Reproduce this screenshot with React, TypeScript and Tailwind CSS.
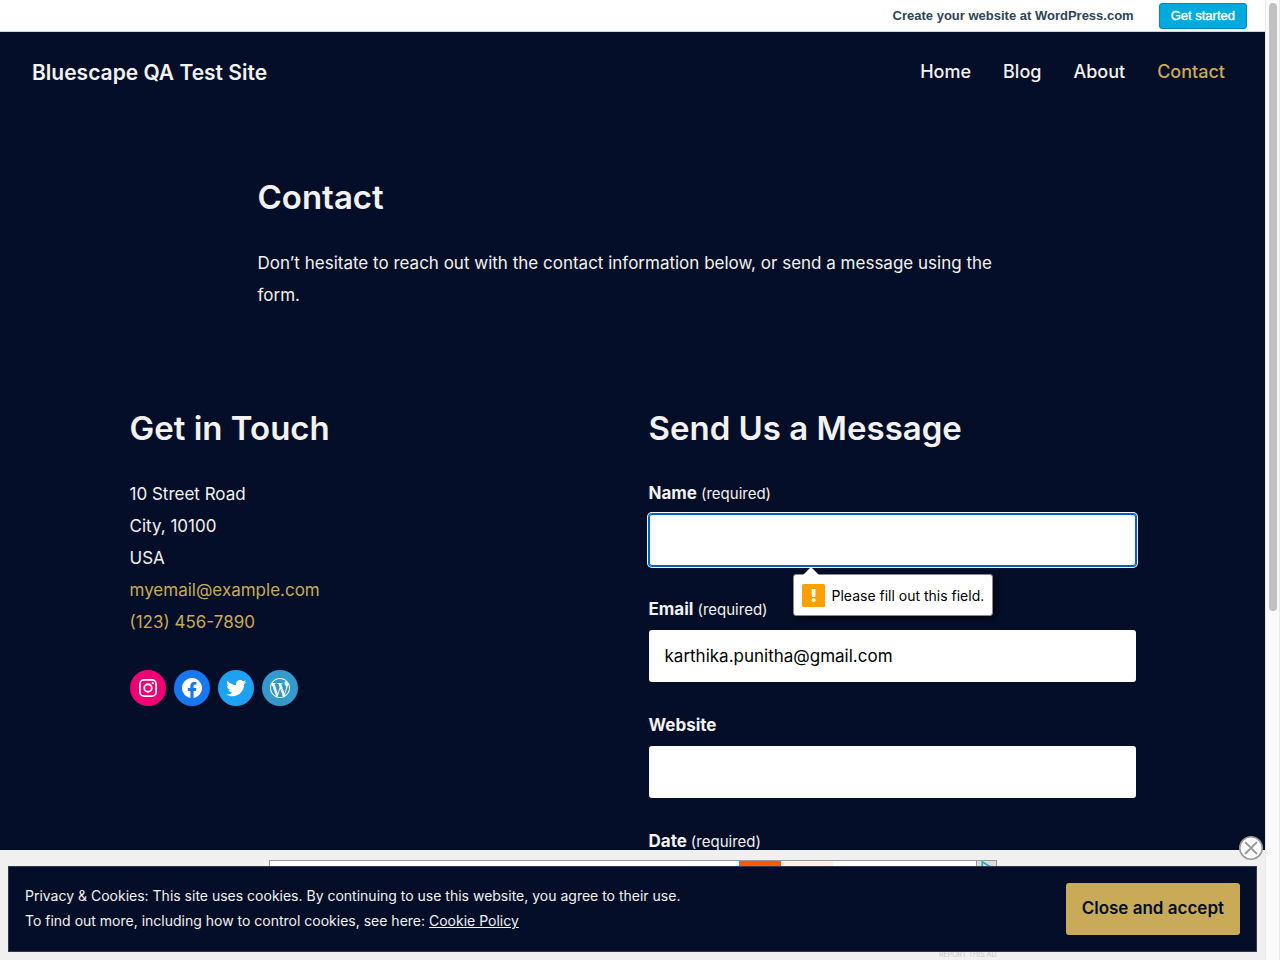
import type { ReactNode } from 'react';

const navItems = [
  { label: 'Home', active: false },
  { label: 'Blog', active: false },
  { label: 'About', active: false },
  { label: 'Contact', active: true },
];

function InstagramIcon() {
  return (
    <svg viewBox="0 0 24 24" className="size-6" fill="none" stroke="currentColor" strokeWidth="1.8" aria-hidden="true">
      <rect x="3.9" y="3.9" width="16.2" height="16.2" rx="4.2" />
      <circle cx="12" cy="12" r="3.75" />
      <circle cx="16.8" cy="7.2" r="1.1" fill="currentColor" stroke="none" />
    </svg>
  );
}

function FacebookIcon() {
  return (
    <svg viewBox="0 0 24 24" className="size-6" fill="currentColor" aria-hidden="true">
      <path d="M12 2C6.5 2 2 6.5 2 12c0 5 3.7 9.1 8.4 9.9v-7H7.9V12h2.5V9.8c0-2.5 1.5-3.9 3.8-3.9 1.1 0 2.2.2 2.2.2v2.5h-1.3c-1.2 0-1.6.8-1.6 1.6V12h2.8l-.4 2.9h-2.3v7C18.3 21.1 22 17 22 12c0-5.5-4.5-10-10-10z" />
    </svg>
  );
}

function TwitterIcon() {
  return (
    <svg viewBox="0 0 24 24" className="size-6" fill="currentColor" aria-hidden="true">
      <path d="M22.23,5.924c-0.736,0.326-1.527,0.547-2.357,0.646c0.847-0.508,1.498-1.312,1.804-2.27c-0.793,0.47-1.671,0.812-2.606,0.996C18.324,4.498,17.257,4,16.077,4c-2.266,0-4.103,1.837-4.103,4.103c0,0.322,0.036,0.635,0.106,0.935C8.67,8.867,5.647,7.234,3.623,4.751C3.27,5.357,3.067,6.062,3.067,6.814c0,1.424,0.724,2.679,1.825,3.415c-0.673-0.021-1.305-0.206-1.859-0.513c0,0.017,0,0.034,0,0.052c0,1.988,1.414,3.647,3.292,4.023c-0.344,0.094-0.707,0.144-1.081,0.144c-0.264,0-0.521-0.026-0.772-0.074c0.522,1.63,2.038,2.816,3.833,2.85c-1.404,1.1-3.174,1.756-5.096,1.756c-0.331,0-0.658-0.019-0.979-0.057c1.816,1.164,3.973,1.843,6.29,1.843c7.547,0,11.675-6.252,11.675-11.675c0-0.178-0.004-0.355-0.012-0.531C20.985,7.47,21.68,6.747,22.23,5.924z" />
    </svg>
  );
}

function WordPressIcon() {
  return (
    <svg viewBox="0 0 24 24" className="size-6" fill="currentColor" aria-hidden="true">
      <path
        fillRule="evenodd"
        d="M12.158,12.786L9.46,20.625c0.806,0.237,1.657,0.366,2.54,0.366c1.047,0,2.051-0.181,2.986-0.51c-0.024-0.038-0.046-0.079-0.065-0.124L12.158,12.786zM3.009,12c0,3.559,2.068,6.634,5.067,8.092L3.788,8.341C3.289,9.459,3.009,10.696,3.009,12zM18.069,11.546c0-1.112-0.399-1.881-0.741-2.48c-0.456-0.741-0.883-1.368-0.883-2.109c0-0.826,0.627-1.596,1.51-1.596c0.04,0,0.078,0.005,0.116,0.007C16.472,3.904,14.34,3.009,12,3.009c-3.141,0-5.904,1.612-7.512,4.052c0.211,0.007,0.41,0.011,0.579,0.011c0.94,0,2.396-0.114,2.396-0.114C7.947,6.93,8.004,7.642,7.52,7.699c0,0-0.487,0.057-1.029,0.085l3.274,9.739l1.968-5.901l-1.401-3.838C9.848,7.756,9.389,7.699,9.389,7.699C8.904,7.67,8.961,6.93,9.446,6.958c0,0,1.484,0.114,2.368,0.114c0.94,0,2.397-0.114,2.397-0.114c0.485-0.028,0.542,0.684,0.057,0.741c0,0-0.488,0.057-1.029,0.085l3.249,9.665l0.897-2.996C17.841,13.284,18.069,12.316,18.069,11.546zM19.889,7.686c0.039,0.286,0.06,0.593,0.06,0.924c0,0.912-0.171,1.938-0.684,3.22l-2.746,7.94c2.673-1.558,4.47-4.454,4.47-7.771C20.991,10.436,20.591,8.967,19.889,7.686zM12,22C6.486,22,2,17.514,2,12C2,6.486,6.486,2,12,2c5.514,0,10,4.486,10,10C22,17.514,17.514,22,12,22z"
      />
    </svg>
  );
}

const socialLinks = [
  { label: 'Instagram', color: 'bg-[#f00075]', icon: <InstagramIcon /> },
  { label: 'Facebook', color: 'bg-[#1778f2]', icon: <FacebookIcon /> },
  { label: 'Twitter', color: 'bg-[#1da1f2]', icon: <TwitterIcon /> },
  { label: 'WordPress', color: 'bg-[#3499cd]', icon: <WordPressIcon /> },
];

function ValidationBubble({ children }: { children: ReactNode }) {
  return (
    <div
      role="alert"
      className="absolute top-full left-36 z-10 mt-2 flex h-[42px] items-center gap-[7px] rounded-[3px] border border-[#8a8a8a] bg-white px-2 text-[14px] whitespace-nowrap text-black shadow-[3px_3px_5px_rgba(0,0,0,0.6)]"
    >
      <svg viewBox="0 0 16 8" className="absolute -top-2 left-[9px] h-2 w-4" aria-hidden="true">
        <path d="M0 8 8 0l8 8z" fill="#fff" />
      </svg>
      <svg viewBox="0 0 23 23" className="size-[23px]" aria-hidden="true">
        <rect width="23" height="23" rx="1.5" fill="#ffa000" />
        <path d="M9.6 5h4l-.4 8h-3.2z" fill="#fff" />
        <circle cx="11.6" cy="16.2" r="1.9" fill="#fff" />
      </svg>
      {children}
    </div>
  );
}

type FieldProps = {
  id: string;
  label: string;
  type?: string;
  required?: boolean;
  value?: string;
  invalid?: string;
};

function Field({ id, label, type = 'text', required = false, value, invalid }: FieldProps) {
  return (
    <div>
      <label htmlFor={id} className="mb-1.5 flex h-[30px] items-baseline gap-1 text-[17px] leading-[30px] font-bold">
        {label}
        {required && <span className="text-[15px] leading-6 font-normal">(required)</span>}
      </label>
      <div className="relative">
        <input
          id={id}
          type={type}
          defaultValue={value}
          className={
            invalid
              ? 'block h-[52px] w-full rounded-[3px] bg-white px-4 text-[17px] text-black shadow-[inset_0_0_0_1px_#005fcc,0_0_0_1px_#005fcc,0_0_0_2px_#fff] outline-none'
              : 'block h-[52px] w-full rounded-[3px] bg-white px-4 text-[17px] text-black'
          }
        />
        {invalid && <ValidationBubble>{invalid}</ValidationBubble>}
      </div>
    </div>
  );
}

export default function App() {
  return (
    <div className="flex h-screen bg-[#040e28] font-['Inter','Liberation_Sans',sans-serif] text-[#f2f2f2]">
      <div className="flex min-w-0 flex-1 flex-col">
        <div className="flex h-8 shrink-0 items-center justify-end gap-[25px] border-b border-[#c8d7e1] bg-white pr-[18px] font-['Liberation_Sans',sans-serif] text-[13px] font-bold text-[#2e4453]">
          <span>Create your website at WordPress.com</span>
          <a
            href="#start"
            className="flex h-[26px] items-center rounded-[3px] border border-[#0087be] bg-[#00aadc] px-[11px] text-[13px] font-normal text-white [-webkit-text-stroke:0.4px_white]"
          >
            Get started
          </a>
        </div>

        <div className="min-h-0 flex-1 overflow-hidden">
          <header className="flex h-[82px] items-center justify-between pr-10 pl-8">
            <a href="#home" className="text-[21px] font-semibold">
              Bluescape QA Test Site
            </a>
            <nav className="flex gap-8 pb-0.5 text-[18px] leading-6 font-medium">
              {navItems.map((item) => (
                <a key={item.label} href={`#${item.label}`} className={item.active ? 'text-[#c9aa57]' : ''}>
                  {item.label}
                </a>
              ))}
            </nav>
          </header>

          <main>
            <section className="mx-auto max-w-[750px] pt-[62px]">
              <h1 className="text-[33px] leading-[42px] font-semibold">Contact</h1>
              <p className="mt-[29px] text-[17px] leading-8">
                Don’t hesitate to reach out with the contact information below, or send a message using the form.
              </p>
            </section>

            <div className="mx-auto mt-24 grid max-w-[1006px] grid-cols-2 gap-8">
              <section>
                <h2 className="text-[33px] leading-[42px] font-semibold">Get in Touch</h2>
                <address className="mt-[29px] flex flex-col items-start text-[17px] leading-8 not-italic">
                  <span>10 Street Road</span>
                  <span>City, 10100</span>
                  <span>USA</span>
                  <a href="mailto:myemail@example.com" className="text-[#c9aa57]">
                    myemail@example.com
                  </a>
                  <a href="tel:1234567890" className="text-[#c9aa57]">
                    (123) 456-7890
                  </a>
                </address>
                <ul className="mt-8 flex gap-2">
                  {socialLinks.map((link) => (
                    <li key={link.label}>
                      <a
                        href={`#${link.label}`}
                        aria-label={link.label}
                        className={`flex size-9 items-center justify-center rounded-full text-white ${link.color}`}
                      >
                        {link.icon}
                      </a>
                    </li>
                  ))}
                </ul>
              </section>

              <section>
                <h2 className="text-[33px] leading-[42px] font-semibold">Send Us a Message</h2>
                <form className="mt-[29px] flex flex-col gap-7">
                  <Field id="name" label="Name" required invalid="Please fill out this field." />
                  <Field id="email" label="Email" type="email" required value="karthika.punitha@gmail.com" />
                  <Field id="website" label="Website" type="url" />
                  <Field id="date" label="Date" required />
                </form>
              </section>
            </div>
          </main>
        </div>

        <aside className="relative flex h-[110px] shrink-0 flex-col items-center bg-[#f0f0f0] pt-2.5">
          <div className="flex h-[90px] w-full max-w-[728px] justify-end border border-[#979797] bg-white">
            <div className="h-full w-[42px] bg-[#ff5a00]" />
            <div className="mr-[143px] h-full w-[52px] bg-[#fff0ea]" />
            <svg viewBox="0 0 20 16" className="h-4 w-5 border-l border-[#979797] bg-[#dcdcdc]" aria-hidden="true">
              <path d="M5.5 0.5v14L17 7.5z" fill="none" stroke="#2fa9bf" strokeWidth="1.8" />
            </svg>
          </div>
          <div className="w-full max-w-[728px] text-right text-[7px] leading-[10px] text-[#c8c8c8]">REPORT THIS AD</div>

          <button
            type="button"
            aria-label="Close ad"
            className="absolute -top-3.5 right-0.5 size-6 rounded-full text-[#999999]"
          >
            <svg viewBox="0 0 24 24" className="size-6" stroke="currentColor" strokeLinecap="round" aria-hidden="true">
              <circle cx="12" cy="12" r="11.2" fill="#fff" strokeWidth="1.6" />
              <path d="m6.5 6.5 11 11m0-11-11 11" strokeWidth="1.8" />
            </svg>
          </button>

          <div className="absolute inset-x-2 bottom-2 flex h-[86px] items-center justify-between border border-[#31394c] bg-[#040e28] px-4">
            <p className="pb-0.5 text-[14px] leading-[25px]">
              Privacy &amp; Cookies: This site uses cookies. By continuing to use this website, you agree to their use.
              <br />
              To find out more, including how to control cookies, see here:{' '}
              <a href="#policy" className="underline">
                Cookie Policy
              </a>
            </p>
            <button
              type="button"
              className="h-[52px] rounded-[3px] bg-[#c9aa57] px-4 text-[17px] font-semibold text-[#040e28]"
            >
              Close and accept
            </button>
          </div>
        </aside>
      </div>

      <div className="w-[15px] shrink-0 border-x border-[#e8e8e8] bg-[#fafafa] px-[3px] pt-[3px]" aria-hidden="true">
        <div className="h-[608px] w-2 rounded-full bg-[#c1c1c1]" />
      </div>
    </div>
  );
}
